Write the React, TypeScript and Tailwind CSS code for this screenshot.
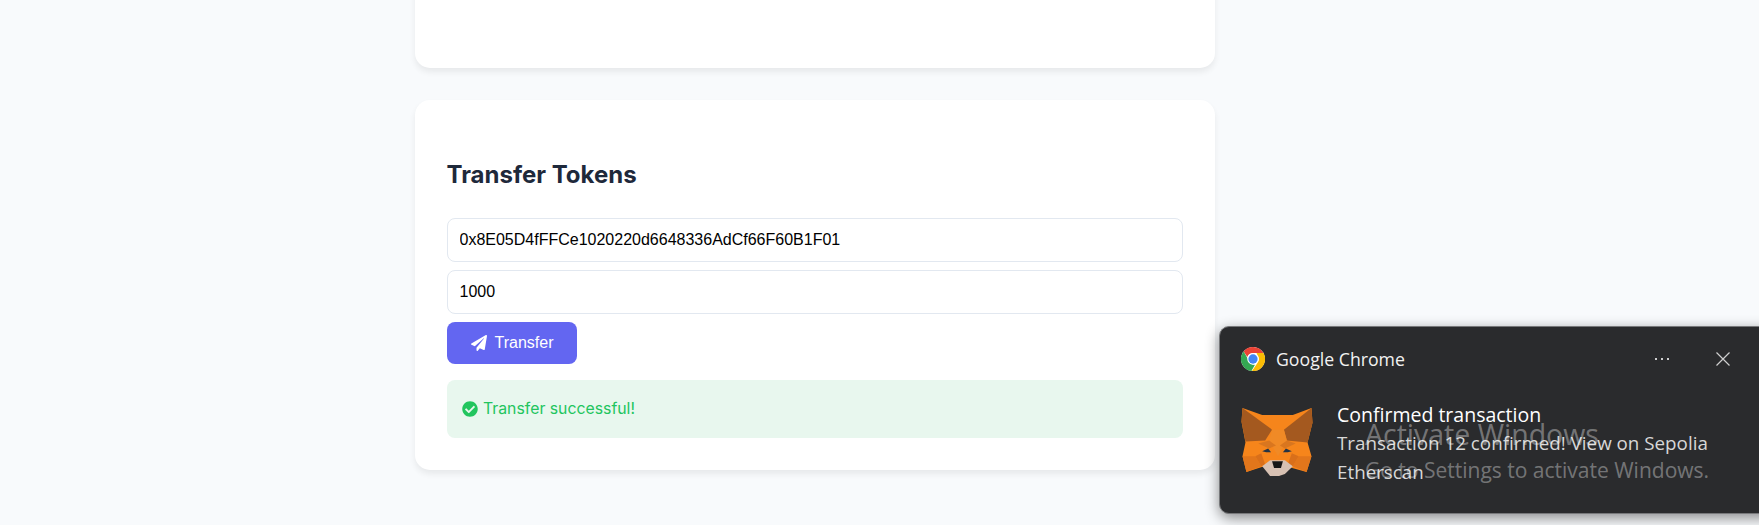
import { FaCheckCircle, FaPaperPlane } from "react-icons/fa"

function ChromeLogo() {
  return (
    <svg viewBox="0 0 48 48" className="h-6 w-6 shrink-0">
      <circle cx="24" cy="24" r="24" fill="#fff" />
      <path d="M24 0a24 24 0 0 1 20.8 12H24a12 12 0 0 0-11.4 8.2L5.3 8.9A24 24 0 0 1 24 0z" fill="#ea4335" />
      <path d="M5.3 8.9l10.9 18.9A12 12 0 0 0 28 35.3l-7.2 12.5A24 24 0 0 1 5.3 8.9z" fill="#34a853" />
      <path d="M44.8 12A24 24 0 0 1 22 48l10.5-15.5A12 12 0 0 0 33 16.5L31 12z" fill="#fbbc04" />
      <circle cx="24" cy="24" r="11.5" fill="#fff" />
      <circle cx="24" cy="24" r="9.3" fill="#4285f4" />
    </svg>
  )
}

function FoxLogo() {
  return (
    <svg viewBox="0 0 72 70" className="mt-[1px] h-[69px] w-[72px] shrink-0">
      {/* head */}
      <polygon points="1,1 21,8 52,8 71,1 72,16 67,36 71,50 66,66 45,60 38,70 30,70 23,60 5,66 1,50 4,36 0,15" fill="#f6851b" />
      {/* ears */}
      <polygon points="1,1 31,23 24,34 4,35 0,15" fill="#a4591f" />
      <polygon points="71,1 72,16 67,36 46,34 43,23" fill="#a4591f" />
      <polygon points="31,23 43,23 46,34 37,50 28,34" fill="#f08a26" />
      {/* cheeks */}
      <polygon points="1,50 14,50 20,60 5,66" fill="#e2761b" />
      <polygon points="71,50 58,50 52,60 66,66" fill="#e2761b" />
      <polygon points="14,50 20,47 24,58 20,60" fill="#d96f1a" />
      <polygon points="58,50 51,47 47,58 52,60" fill="#d96f1a" />
      <polygon points="17,37 28,34 35,39 28,42" fill="#d9761f" />
      <polygon points="55,37 46,34 39,39 44,42" fill="#d9761f" />
      {/* eyes */}
      <polygon points="21,45 27,42 30,46 25,46" fill="#233447" />
      <polygon points="51,45 45,42 42,46 47,46" fill="#233447" />
      {/* muzzle */}
      <polygon points="21,60 29,54 44,54 52,60 44,68 38,70 29,70" fill="#d7c1b3" />
      <polygon points="31,55 42,55 40,62 33,62" fill="#161616" />
    </svg>
  )
}

function TransferCard() {
  return (
    <section className="mt-8 rounded-[15px] bg-white p-8 pt-[60px] shadow-[0_4px_6px_rgba(0,0,0,0.07)]">
      <h2 className="mb-[29px] -ml-[0.5px] text-[24px] leading-[29px] font-bold text-[#1e293b]">Transfer Tokens</h2>
      <input
        readOnly
        value="0x8E05D4fFFCe1020220d6648336AdCf66F60B1F01"
        className="mb-2 block h-[44px] w-full rounded-lg border border-[#e2e8f0] bg-white px-[11.5px] font-['Liberation_Sans',sans-serif] text-base text-black outline-none"
      />
      <input
        readOnly
        value="1000"
        className="mb-2 block h-[44px] w-full rounded-lg border border-[#e2e8f0] bg-white px-[11.5px] font-['Liberation_Sans',sans-serif] text-base text-black outline-none"
      />
      <button className="flex h-[42px] w-[130px] items-center justify-center gap-2 rounded-lg bg-[#6366f1] font-['Liberation_Sans',sans-serif] text-base text-white">
        <FaPaperPlane size={16} />
        Transfer
      </button>
      <div className="mt-4 flex h-[58px] items-center gap-[5px] rounded-lg bg-[#e8f7ee] px-[15px] text-[15.8px] text-[#22c55e]">
        <FaCheckCircle size={16} />
        Transfer successful!
      </div>
    </section>
  )
}

function ChromeToast() {
  return (
    <div className="absolute top-[326px] left-[1219px] h-[188px] w-[560px] rounded-[10px] border border-[#77787a] bg-[#2a2b2d] font-['Open_Sans',sans-serif] text-white shadow-[0_4px_14px_rgba(0,0,0,0.45)]">
      <div className="flex items-center pt-[19px] pl-[21px]">
        <ChromeLogo />
        <span className="ml-[11px] text-[17.7px] text-[#f2f2f2]">Google Chrome</span>
      </div>
      <div className="absolute top-[31px] left-[435px] flex gap-[4px]">
        <i className="h-[2px] w-[2px] bg-[#cfcfcf]" />
        <i className="h-[2px] w-[2px] bg-[#cfcfcf]" />
        <i className="h-[2px] w-[2px] bg-[#cfcfcf]" />
      </div>
      <svg viewBox="0 0 14 14" className="absolute top-[25px] left-[496px] h-[14px] w-[14px]" stroke="#cfcfcf" strokeWidth="1.2">
        <path d="M0.5 0.5l13 13M13.5 0.5l-13 13" />
      </svg>
      <div className="mt-[33px] flex pl-[21px]">
        <FoxLogo />
        <div className="-mt-[5px] ml-[24px] w-[385px] leading-[28.5px]">
          <div className="text-[19.5px] text-white">Confirmed transaction</div>
          <div className="text-[18.8px] text-[#d8d8d8]">Transaction 12 confirmed! View on Sepolia Etherscan</div>
        </div>
      </div>
    </div>
  )
}

export default function App() {
  return (
    <div className="relative h-[525px] overflow-hidden bg-[#f8fafc] font-['Inter',sans-serif]">
      <main className="ml-[415px] w-[800px]">
        <section className="-mt-[100px] h-[168px] rounded-[15px] bg-white shadow-[0_4px_6px_rgba(0,0,0,0.07)]" />
        <TransferCard />
      </main>
      <ChromeToast />
      {/* windows watermark sits on top of everything */}
      <div className="pointer-events-none absolute top-[415px] left-[1365px] font-['Open_Sans',sans-serif] text-[rgba(255,255,255,0.36)]">
        <div className="text-[28.5px] leading-[38px]">Activate Windows</div>
        <div className="text-[21px] leading-[34px]">Go to Settings to activate Windows.</div>
      </div>
    </div>
  )
}
